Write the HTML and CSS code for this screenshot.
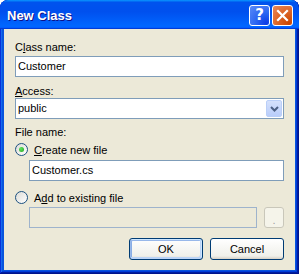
FILE: index.html
```html
<!DOCTYPE html>
<html lang="en">
<head>
    <meta charset="UTF-8">
    <title>New Class</title>
    <link rel="stylesheet" href="styles.css">
</head>
<body>
    <div class="window">
        <div class="title-bar">
            <span class="title">New Class</span>
            <div class="title-buttons">
                <button class="tb-btn help">?</button>
                <button class="tb-btn close">
                    <svg width="13" height="13" viewBox="0 0 13 13"><path d="M2 2 L11 11 M11 2 L2 11" stroke="#fff" stroke-width="2.2" stroke-linecap="square"/></svg>
                </button>
            </div>
        </div>
        <div class="content">
            <div class="label">C<u>l</u>ass name:</div>
            <div class="textbox">Customer</div>

            <div class="label gap-access"><u>A</u>ccess:</div>
            <div class="textbox combo">
                <span>public</span>
                <span class="drop">
                    <svg width="9" height="6" viewBox="0 0 9 6"><path d="M1 1 L4.5 4.5 L8 1" fill="none" stroke="#4d6185" stroke-width="2"/></svg>
                </span>
            </div>

            <div class="label gap-file">File name:</div>
            <div class="radio-row first">
                <span class="radio checked"></span>
                <span><u>C</u>reate new file</span>
            </div>
            <div class="textbox indent">Customer.cs</div>

            <div class="radio-row second">
                <span class="radio"></span>
                <span>A<u>d</u>d to existing file</span>
            </div>
            <div class="browse-row">
                <div class="textbox disabled"></div>
                <button class="browse">.</button>
            </div>

            <div class="buttons">
                <button class="btn default">OK</button>
                <button class="btn">Cancel</button>
            </div>
        </div>
    </div>
</body>
</html>
```

FILE: styles.css
```css
body {
    margin: 0;
    font-family: "Liberation Sans", Arial, sans-serif;
    font-size: 11px;
    color: #000;
    background: #fff;
}
.window {
    width: 299px;
    height: 274px;
    box-sizing: border-box;
    border-radius: 8px 8px 0 0;
    background: #0855dd;
    box-shadow: inset -1px -1px #00138c, inset 1px 1px #0831d9, inset -2px -2px #001ea0, inset 2px 2px #166aee, inset -3px -3px #003bda, inset 3px 3px #0855dd;
    display: flex;
    flex-direction: column;
    overflow: hidden;
}
.title-bar {
    height: 29px;
    flex-shrink: 0;
    border-radius: 8px 8px 0 0;
    background: linear-gradient(180deg, #0997ff, #0053ee 8%, #0050ee 40%, #0066ff 88%, #0066ff 93%, #005bff 95%, #003dd7 96%, #003dd7);
    display: flex;
    align-items: center;
    justify-content: space-between;
    padding: 0 6px 0 7px;
}
.title {
    font-family: "Liberation Sans", Arial, sans-serif;
    font-weight: bold;
    font-size: 13px;
    color: #fff;
    text-shadow: 1px 1px #0f1089;
    margin-top: 1px;
}
.title-buttons {
    display: flex;
    gap: 2px;
    margin-top: 1px;
}
.tb-btn {
    width: 21px;
    height: 21px;
    border: 1px solid #fff;
    border-radius: 3px;
    padding: 0;
    display: flex;
    align-items: center;
    justify-content: center;
    color: #fff;
}
.help {
    background: radial-gradient(circle at 85% 90%, #0d3ce6 0%, #2d67f2 45%, #5a8cf8 100%);
    font-family: "DejaVu Sans", sans-serif;
    font-weight: bold;
    font-size: 15px;
    line-height: 1;
}
.close {
    background: radial-gradient(circle at 85% 90%, #cc4600 0%, #dc6527 50%, #e88a5e 100%);
}
.content {
    flex: 1;
    margin: 0 4px 4px;
    background: #ece9d8;
    padding: 11px 11px 0 11px;
}
.label {
    line-height: 14px;
    height: 14px;
    margin-bottom: 2px;
}
.gap-access {
    margin-top: 7px;
    margin-bottom: 0;
}
.gap-file {
    margin-top: 6px;
    margin-bottom: 0;
}
.textbox {
    height: 21px;
    box-sizing: border-box;
    border: 1px solid #7f9db9;
    background: #fff;
    padding: 0 2px;
    line-height: 19px;
}
.combo {
    display: flex;
    justify-content: space-between;
    align-items: center;
    padding-right: 1px;
}
.drop {
    width: 16px;
    height: 17px;
    box-sizing: border-box;
    border: 1px solid #bacff8;
    border-radius: 2px;
    background: linear-gradient(180deg, #d5e1fc, #b9cdfa);
    display: flex;
    align-items: center;
    justify-content: center;
}
.radio-row {
    display: flex;
    align-items: center;
    gap: 6px;
    height: 15px;
}
.radio-row.first {
    margin-top: 3px;
    margin-bottom: 3px;
}
.radio-row.second {
    margin-top: 9px;
    margin-bottom: 2px;
}
.radio {
    width: 13px;
    height: 13px;
    box-sizing: border-box;
    border: 1px solid #1c5180;
    border-radius: 50%;
    background: linear-gradient(135deg, #dcdcd6, #fff);
    display: flex;
    align-items: center;
    justify-content: center;
}
.radio.checked::after {
    content: "";
    width: 5px;
    height: 5px;
    border-radius: 50%;
    background: radial-gradient(circle at 35% 35%, #5ee65e, #21a121);
}
.indent {
    margin-left: 14px;
}
.browse-row {
    display: flex;
    gap: 7px;
    margin-left: 14px;
}
.textbox.disabled {
    flex: 1;
    background: #ece9d8;
    border-color: #9eb3cc;
}
.browse {
    width: 20px;
    height: 21px;
    padding: 0;
    border: 1px solid #c9c7ba;
    border-radius: 3px;
    background: #f5f4ea;
    color: #a0a0a0;
    font-family: "Liberation Sans", Arial, sans-serif;
    font-size: 11px;
    line-height: 24px;
}
.buttons {
    display: flex;
    justify-content: flex-end;
    gap: 7px;
    margin-top: 10px;
}
.btn {
    width: 74px;
    height: 22px;
    padding: 0;
    border: 1px solid #003c74;
    border-radius: 3px;
    background: linear-gradient(180deg, #fff, #f0f0ea 85%, #d6d0c5);
    font-family: "Liberation Sans", Arial, sans-serif;
    font-size: 11px;
    color: #000;
}
.btn.default {
    box-shadow: inset -1px 1px #cee7ff, inset 1px 2px #98b8ea, inset -2px -2px #bcd4f6, inset 1px -1px #89ade4, inset 2px 0 #89ade4;
}
```
